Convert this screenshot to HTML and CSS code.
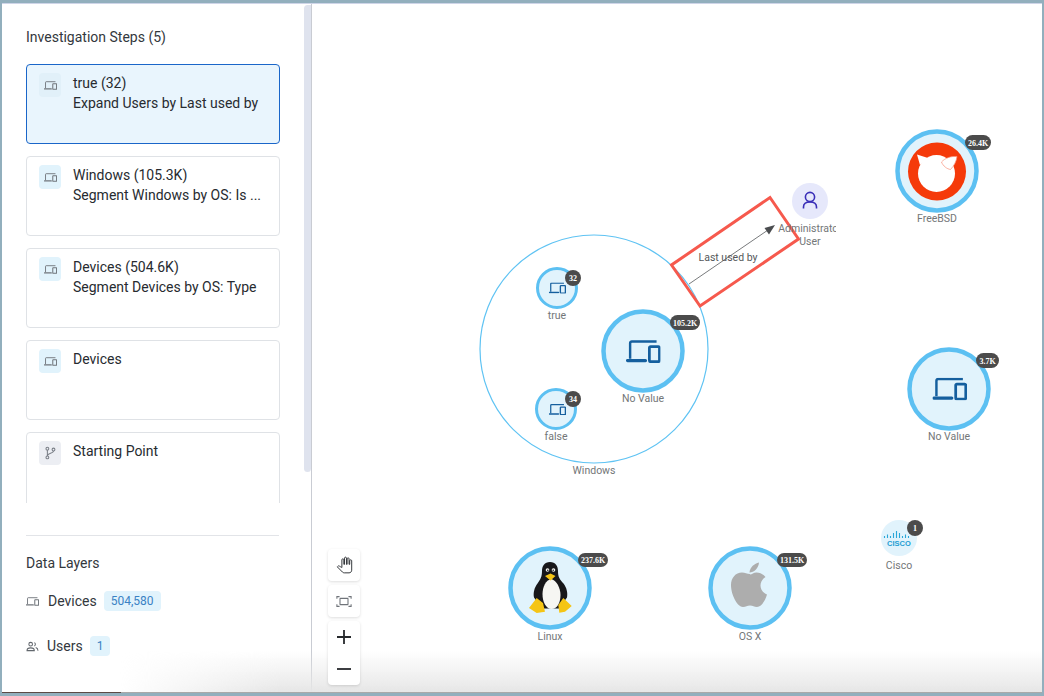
FILE: index.html
```html
<!DOCTYPE html>
<html lang="en">
<head>
  <meta charset="UTF-8">
  <title>Investigation</title>
  <link rel="stylesheet" href="styles.css">
</head>
<body>
  <svg class="defs" width="0" height="0">
    <defs>
      <symbol id="devices" viewBox="0 0 24 16">
        <path d="M2.800 13V2.200C2.800 1.500 3.300 1 4 1H21.200" fill="none" stroke="currentColor" stroke-width="1.700"/>
        <path d="M1 14.300H13.500" fill="none" stroke="currentColor" stroke-width="2.200" stroke-linecap="round"/>
        <rect x="16.200" y="4.600" width="7" height="10.500" rx=".8" fill="none" stroke="currentColor" stroke-width="1.900"/>
      </symbol>
    </defs>
  </svg>

  <div class="frame">
    <aside class="sidebar">
      <div class="steps-panel">
        <h2 class="panel-title">Investigation Steps (5)</h2>
        <div class="steps">
          <div class="step step-active">
            <span class="step-icon"><svg class="icon-sm"><use href="#devices"/></svg></span>
            <div class="step-text">
              <div>true (32)</div>
              <div>Expand Users by Last used by</div>
            </div>
          </div>
          <div class="step">
            <span class="step-icon"><svg class="icon-sm"><use href="#devices"/></svg></span>
            <div class="step-text">
              <div>Windows (105.3K)</div>
              <div>Segment Windows by OS: Is ...</div>
            </div>
          </div>
          <div class="step">
            <span class="step-icon"><svg class="icon-sm"><use href="#devices"/></svg></span>
            <div class="step-text">
              <div>Devices (504.6K)</div>
              <div>Segment Devices by OS: Type</div>
            </div>
          </div>
          <div class="step">
            <span class="step-icon"><svg class="icon-sm"><use href="#devices"/></svg></span>
            <div class="step-text">
              <div>Devices</div>
            </div>
          </div>
          <div class="step">
            <span class="step-icon step-icon-grey">
              <svg class="icon-branch" viewBox="0 0 16 16">
                <circle cx="5" cy="3" r="1.600"/>
                <circle cx="5" cy="13" r="1.600"/>
                <circle cx="12" cy="4" r="1.600"/>
                <path d="M5 4.600v6.800M12 5.600C12 8.500 5.500 8 5 11"/>
              </svg>
            </span>
            <div class="step-text">
              <div>Starting Point</div>
            </div>
          </div>
        </div>
        <div class="scrollbar"></div>
      </div>

      <div class="layers">
        <h2 class="panel-title">Data Layers</h2>
        <div class="layer layer-devices">
          <svg class="icon-layer"><use href="#devices"/></svg>
          <span class="layer-name">Devices</span>
          <span class="count">504,580</span>
        </div>
        <div class="layer layer-users">
          <svg class="icon-users" viewBox="0 0 14 12">
            <circle cx="5" cy="3.500" r="2"/>
            <path d="M1 10.500c0-4 8-4 8 0zM9 1.800a2 2 0 0 1 0 3.600M10.500 7c1.500.5 2.500 1.500 2.500 3.500"/>
          </svg>
          <span class="layer-name">Users</span>
          <span class="count">1</span>
        </div>
      </div>
    </aside>

    <main class="canvas">
      <svg class="graph" width="731" height="690" viewBox="312 4 731 690">
        <defs>
          <clipPath id="label-clip"><rect x="760" y="215" width="76" height="35"/></clipPath>
        </defs>

        <circle class="group" cx="594" cy="349" r="114"/>
        <text class="label" x="594" y="474">Windows</text>

        <!-- edge -->
        <path class="edge" d="M689 284L768 230"/>
        <path class="edge-head" d="M775 225L764.500 228L769 234.500Z"/>
        <text class="label label-edge" x="728" y="261">Last used by</text>
        <path class="highlight" d="M770 197.500L798.500 239L700 306L671.500 265Z"/>

        <circle class="user-node" cx="810" cy="201" r="18"/>
        <g class="user-icon">
          <circle cx="810" cy="197" r="4.600"/>
          <path d="M803.500 208.500v-1.500c0-3 2-5 6.500-5s6.500 2 6.500 5v1.500"/>
        </g>
        <g clip-path="url(#label-clip)">
          <text class="label" x="810" y="232">Administrator</text>
          <text class="label" x="810" y="245">User</text>
        </g>

        <!-- small nodes -->
        <circle class="node" cx="557" cy="288" r="19.500"/>
        <svg class="device" x="548.700" y="282.300" width="17.300" height="11.500"><use href="#devices"/></svg>
        <text class="label" x="557" y="319">true</text>
        <circle class="badge" cx="573" cy="278" r="8"/>
        <text class="badge-text" x="573" y="280.500">32</text>

        <circle class="node" cx="556" cy="409" r="19.500"/>
        <svg class="device" x="548.700" y="403.800" width="17.300" height="11.500"><use href="#devices"/></svg>
        <text class="label" x="556" y="440">false</text>
        <circle class="badge" cx="573" cy="399" r="8"/>
        <text class="badge-text" x="573" y="401.500">34</text>

        <!-- large nodes -->
        <circle class="node node-lg" cx="643" cy="351" r="39.500"/>
        <svg class="device" x="626" y="340" width="34.700" height="23"><use href="#devices"/></svg>
        <text class="label" x="643" y="402">No Value</text>
        <rect class="badge" x="670" y="315" width="30" height="15" rx="7.500"/>
        <text class="badge-text" x="685" y="325.500">105.2K</text>

        <circle class="node node-lg" cx="949" cy="389" r="39.500"/>
        <svg class="device" x="932.300" y="377.500" width="34.700" height="23"><use href="#devices"/></svg>
        <text class="label" x="949" y="440">No Value</text>
        <rect class="badge" x="976" y="353" width="23" height="15" rx="7.500"/>
        <text class="badge-text" x="987.500" y="363.500">3.7K</text>

        <!-- freebsd -->
        <circle class="node node-lg" cx="937" cy="171" r="39.500"/>
        <circle class="bsd-red" cx="937" cy="171.500" r="29"/>
        <circle class="bsd-white" cx="936.500" cy="173.500" r="18.500"/>
        <path class="bsd-white" d="M917 154.500L928 158L920 165Z"/>
        <path class="bsd-horn" d="M941.500 162C945 158 951 156 957 156.500C956.500 161 954 166 950.500 169.500C947 169 943 166 941.500 162Z"/>
        <text class="label" x="937" y="222">FreeBSD</text>
        <rect class="badge" x="965" y="135" width="26" height="15" rx="7.500"/>
        <text class="badge-text" x="978" y="145.500">26.4K</text>

        <!-- linux -->
        <circle class="node node-lg" cx="550" cy="588" r="39.500"/>
        <g>
          <path class="tux-black" d="M550 562c-5.500 0-8 4-8 9 0 6-1.500 8-4.500 12.500-3 4-4.500 9-3.500 14l8 11h17l8-11c1-5-.5-10-3.500-14-4-4.500-5.500-6.500-5.500-12.500 0-5-2.500-9-8-9z"/>
          <path class="tux-white" d="M551 579c-5 1-8.500 8-8.500 15 0 8 3.500 15 9 15s9-6 9-14c0-7-4-15-9.500-16z"/>
          <circle class="tux-white" cx="547.500" cy="570" r="1.800"/>
          <circle class="tux-white" cx="553.500" cy="570" r="1.800"/>
          <circle class="tux-black" cx="547.800" cy="570.300" r=".8"/>
          <circle class="tux-black" cx="553.200" cy="570.300" r=".8"/>
          <path class="tux-yellow" d="M545 576l5.500-2.500 5 2.500-5 4.500zM529 608l7.700-10 6.300 5 2 8.700-8.300 1.300zM571.700 606l-8.400-8-5 7 1 7.700 5.700-1z"/>
        </g>
        <text class="label" x="550" y="640">Linux</text>
        <rect class="badge" x="578" y="553" width="30" height="14" rx="7"/>
        <text class="badge-text" x="593" y="563">237.6K</text>

        <!-- os x -->
        <circle class="node node-lg" cx="750" cy="588" r="39.500"/>
        <path class="apple" d="M759 562.500c-4.500 1-9 4.500-9.500 10 4.500 0 9-4 9.500-10zM750 574c-3 0-5-1.500-8-1.500-6.500 0-11 5.500-11 12.500 0 10 6.500 22 12 22 3 0 4-1.500 7-1.500s4 1.500 7 1.500c4.500 0 8.500-7 10-12.500-4-1.500-6.500-5-6.500-9 0-3.500 2-6.500 5-8.500-2.500-3-5.500-4.500-9-4.500-3 0-4.500 2-6.500 2z"/>
        <text class="label" x="750" y="640">OS X</text>
        <rect class="badge" x="777" y="553" width="30" height="14" rx="7"/>
        <text class="badge-text" x="792" y="563">131.5K</text>

        <!-- cisco -->
        <circle class="cisco-node" cx="899" cy="538" r="18"/>
        <path class="cisco-bars" d="M884.500 536v2M887.500 534.500v3.500M890.500 536v2M893.500 533v5M896.500 531v7M899.500 533v5M902.500 536v2M905.500 534.500v3.500M908.500 536v2"/>
        <text class="cisco-text" x="899" y="546">CISCO</text>
        <circle class="badge" cx="915" cy="528" r="8"/>
        <text class="badge-text" x="915" y="530.500">1</text>
        <text class="label" x="899" y="568.500">Cisco</text>
      </svg>

      <div class="controls">
        <button class="ctrl">
          <svg width="17" height="18" viewBox="-1 -1 26 26">
            <path class="ctrl-thin" d="M23 5.500V20c0 2.200-1.800 4-4 4h-7.300c-1.080 0-2.100-.43-2.850-1.190L1 14.830s1.260-1.230 1.300-1.250c.22-.19.49-.29.79-.29.22 0 .42.06.6.16.04.01 4.310 2.460 4.310 2.460V4c0-.83.67-1.500 1.500-1.500S11 3.170 11 4v7h1V1.500c0-.83.67-1.500 1.500-1.500S15 .67 15 1.500V11h1V2.500c0-.83.67-1.500 1.500-1.500s1.500.67 1.500 1.500V11h1V5.500c0-.83.67-1.500 1.500-1.500s1.500.67 1.500 1.500z"/>
          </svg>
        </button>
        <button class="ctrl">
          <svg width="16" height="13" viewBox="0 0 18 14">
            <rect class="ctrl-grey" x="4.500" y="3.500" width="9" height="7" rx=".5"/>
            <path class="ctrl-grey" d="M1 4V1.500h3M14 1.500h3V4M17 10v2.500h-3M4 12.500H1V10"/>
          </svg>
        </button>
        <div class="ctrl-group">
          <button class="ctrl ctrl-flat">
            <svg width="16" height="16" viewBox="0 0 16 16"><path class="ctrl-dark" d="M8 1v14M1 8h14"/></svg>
          </button>
          <button class="ctrl ctrl-flat">
            <svg width="16" height="16" viewBox="0 0 16 16"><path class="ctrl-dark" d="M1 8h14"/></svg>
          </button>
        </div>
      </div>
    </main>

    <div class="bottom-fade"></div>
    <div class="bottom-strip"></div>
    <div class="bottom-line"></div>
  </div>
</body>
</html>
```

FILE: styles.css
```css
* {
  box-sizing: border-box;
}

html, body {
  margin: 0;
  height: 100%;
  overflow: hidden;
}

body {
  font-family: Roboto, 'Noto Sans', sans-serif;
  background-color: #92afbd;
  color: #2b2f33;
  padding: 3px 2px 3px 2px;
}

.defs {
  position: absolute;
}

.frame {
  position: relative;
  display: flex;
  height: 100%;
  background-color: #ffffff;
  border-top: 1px solid #cfd5e8;
  overflow: hidden;
}

.sidebar {
  width: 310px;
  flex: none;
  display: flex;
  flex-direction: column;
  border-right: 1px solid #c9ccd3;
}

.steps-panel {
  position: relative;
  height: 499px;
  padding: 24px 0 0 24px;
  overflow: hidden;
  flex: none;
}

.panel-title {
  margin: 0;
  font-size: 14px;
  font-weight: 400;
  line-height: 18px;
  color: #33383d;
}

.steps {
  display: flex;
  flex-direction: column;
  gap: 12px;
  margin-top: 18px;
  width: 254px;
}

.step {
  display: flex;
  height: 80px;
  flex: none;
  padding: 8px 12px;
  gap: 12px;
  border: 1px solid #dfe2e6;
  border-radius: 4px;
  font-size: 14px;
  line-height: 20px;
  color: #272b30;
}

.step-active {
  background-color: #e9f5fd;
  border-color: #1a66c9;
}

.step-icon {
  width: 22px;
  height: 24px;
  flex: none;
  display: flex;
  align-items: center;
  justify-content: center;
  background-color: #e1f3fc;
  border-radius: 4px;
  color: #70757b;
}

.step-active .step-icon {
  background-color: #e1f0f9;
}

.step-icon-grey {
  background-color: #eceef3;
}

.step-text {
  min-width: 0;
  flex: 1;
}

.icon-sm {
  width: 13px;
  height: 9px;
}

.icon-branch {
  width: 14px;
  height: 16px;
  fill: none;
  stroke: #7a7f87;
  stroke-width: 1.2;
}

.scrollbar {
  position: absolute;
  top: 1px;
  right: 0;
  width: 7px;
  height: 467px;
  background-color: #dfe3ee;
  border-radius: 4px 0 4px 4px;
}

.layers {
  margin: 32px 32px 0 24px;
  padding-top: 18px;
  border-top: 1px solid #e2e4e8;
}

.layer {
  display: flex;
  align-items: center;
  font-size: 14px;
  color: #33383d;
}

.layer-devices {
  margin-top: 19px;
  height: 20px;
}

.layer-users {
  margin-top: 25px;
  height: 20px;
}

.icon-layer {
  width: 13px;
  height: 9px;
  margin-right: 9px;
  color: #70757b;
}

.icon-users {
  width: 13px;
  height: 11px;
  margin-right: 8px;
  fill: none;
  stroke: #62676d;
  stroke-width: 1.1;
}

.count {
  margin-left: 7px;
  padding: 0 7px;
  height: 20px;
  line-height: 20px;
  font-size: 12px;
  color: #3a82c4;
  background-color: #e1f3fc;
  border-radius: 4px;
}

.canvas {
  position: relative;
  flex: 1;
  min-width: 0;
}

.graph {
  position: absolute;
  top: 0;
  left: 0;
}

.group {
  fill: none;
  stroke: #5fc3f3;
  stroke-width: 1.2;
}

.node {
  fill: #e1f3fc;
  stroke: #5cc0f2;
  stroke-width: 3;
}

.node-lg {
  stroke-width: 4.5;
}

.device {
  color: #155f9e;
}

.label {
  font-family: Roboto, sans-serif;
  font-size: 10.5px;
  fill: #737678;
  text-anchor: middle;
}

.label-edge {
  fill: #54575a;
}

.badge {
  fill: #4b4b4b;
}

.badge-text {
  font-family: 'Liberation Serif', serif;
  font-size: 8px;
  font-weight: 700;
  fill: #ffffff;
  text-anchor: middle;
}

.edge {
  fill: none;
  stroke: #55585b;
  stroke-width: .8;
}

.edge-head {
  fill: #4a4c4f;
}

.highlight {
  fill: none;
  stroke: #f6594d;
  stroke-width: 3;
}

.user-node {
  fill: #e6e8fb;
}

.user-icon {
  fill: none;
  stroke: #3a2fb8;
  stroke-width: 1.6;
}

.bsd-red {
  fill: #f53a0a;
}

.bsd-white {
  fill: #ffffff;
}

.bsd-horn {
  fill: #ffffff;
  stroke: #f8907a;
  stroke-width: .7;
}

.tux-black {
  fill: #17171a;
}

.tux-white {
  fill: #f6f6f2;
}

.tux-yellow {
  fill: #f5c515;
}

.apple {
  fill: #adadad;
}

.cisco-node {
  fill: #e1f3fc;
}

.cisco-bars {
  fill: none;
  stroke: #2aa7d8;
  stroke-width: 1.1;
}

.cisco-text {
  font-family: 'Liberation Sans', sans-serif;
  font-size: 7.5px;
  font-weight: 700;
  fill: #1c9ed3;
  text-anchor: middle;
}

.controls {
  position: absolute;
  z-index: 1;
  left: 16px;
  bottom: 8px;
  display: flex;
  flex-direction: column;
  gap: 4px;
  width: 32px;
}

.ctrl {
  display: flex;
  align-items: center;
  justify-content: center;
  width: 32px;
  height: 32px;
  padding: 0;
  border: none;
  background-color: #ffffff;
  border-radius: 4px;
  box-shadow: 0 1px 3px #00000022;
}

.ctrl-group {
  border-radius: 4px;
  background-color: #ffffff;
  box-shadow: 0 1px 3px #00000022;
}

.ctrl-flat {
  box-shadow: none;
  background-color: transparent;
}

.ctrl-thin {
  fill: #ffffff;
  stroke: #33363a;
  stroke-width: 1.5;
}

.ctrl-grey {
  fill: none;
  stroke: #70747a;
  stroke-width: 1.2;
}

.ctrl-dark {
  fill: none;
  stroke: #26292c;
  stroke-width: 1.8;
}

.bottom-fade {
  position: absolute;
  left: 118px;
  right: 0;
  bottom: 0;
  height: 42px;
  pointer-events: none;
  background: linear-gradient(to bottom, #ffffff00, #e6e6e6);
  -webkit-mask-image: linear-gradient(to right, transparent, #000 160px);
  mask-image: linear-gradient(to right, transparent, #000 160px);
}

.bottom-strip {
  position: absolute;
  left: 0;
  bottom: 0;
  width: 119px;
  height: 1px;
  background-color: #5b4a45;
}

.bottom-line {
  position: absolute;
  left: 119px;
  right: 0;
  bottom: 0;
  height: 1px;
  background-color: #a9a9a9;
}
```
